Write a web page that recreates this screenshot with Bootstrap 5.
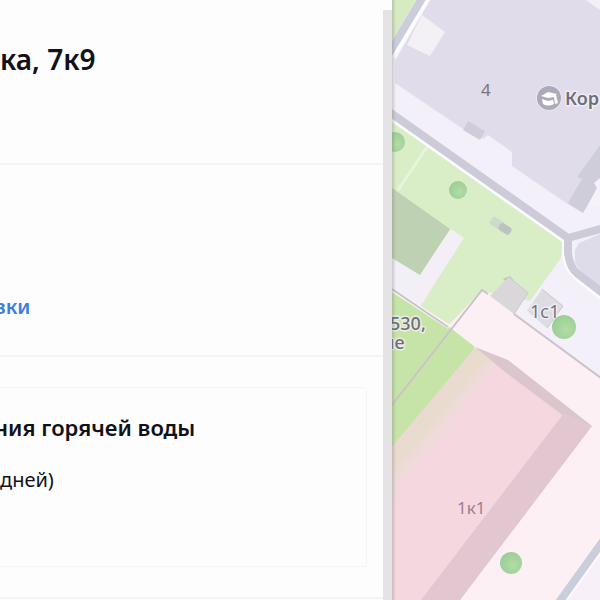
<!DOCTYPE html>
<html lang="ru">
<head>
<meta charset="utf-8">
<meta name="viewport" content="width=device-width, initial-scale=1">
<title>Отключение горячей воды</title>
<link href="https://cdn.jsdelivr.net/npm/bootstrap@5.3.0/dist/css/bootstrap.min.css" rel="stylesheet">
<style>
body { font-family: "Noto Sans", "Open Sans", sans-serif; color: #111118; background: #fefdfe; }
.panel { flex: 0 0 392px; background: #fefdfe; }
.panel-body { min-width: 0; }
.track { width: 9px; margin-top: 10px; background: #e5e3e6; }
.section { border-bottom: 2px solid #f5f3f7; white-space: nowrap; }
.address { height: 165px; padding-top: 40px; }
.address h1 { font-size: 28px; line-height: 38px; font-weight: 600; margin: 0; }
.details { height: 192px; padding-top: 128px; }
.details a { font-size: 20px; line-height: 28px; font-weight: 600; color: #3b7de0; margin-left: -6px; text-decoration: none; }
.outage { height: 242px; padding: 30px 16px 30px 0; }
.notice { border: 1px solid #f6f3f8; border-left: 0; padding-top: 23px; overflow: hidden; }
.notice h2 { font-size: 22px; line-height: 32px; font-weight: 600; margin: 0 0 23px -6px; }
.notice p { font-size: 20px; line-height: 28px; margin: 0; }
.map { min-width: 0; background: #f3f0f9; }
.map svg { width: 100%; height: 100%; display: block; }
.map text { font-family: "Noto Sans", sans-serif; fill: #77747f; }
.map .halo { paint-order: stroke; stroke: #f4f3f6; stroke-width: 3px; stroke-linejoin: round; stroke-opacity: .8; }
.map .poi { fill: #6f6d78; }
.map .house { fill: #9b7f8c; }
</style>
<script src="https://cdn.jsdelivr.net/npm/bootstrap@5.3.0/dist/js/bootstrap.bundle.min.js"></script>
</head>
<body>
<div class="d-flex vh-100 overflow-hidden">
  <aside class="panel d-flex overflow-hidden">
    <main class="panel-body flex-grow-1">
      <header class="section address"><h1>ка, 7к9</h1></header>
      <section class="section details"><a href="#" class="d-inline-block">вки</a></section>
      <section class="section outage">
        <div class="notice h-100 rounded-end-1">
          <h2>ния горячей воды</h2>
          <p>дней)</p>
        </div>
      </section>
    </main>
    <div class="track"></div>
  </aside>
  <div class="map flex-grow-1">
    <svg viewBox="392 0 208 600" preserveAspectRatio="xMinYMin slice" role="img" aria-label="Карта">
      <defs>
        <linearGradient id="fade" gradientUnits="userSpaceOnUse" x1="430" y1="392" x2="462" y2="418">
          <stop offset="0" stop-color="#c9e5aa"/><stop offset=".12" stop-color="#ead9d2"/><stop offset=".45" stop-color="#e8dccd"/><stop offset=".75" stop-color="#f0dadb"/><stop offset="1" stop-color="#f5d8df"/>
        </linearGradient>
        <radialGradient id="leaf" cx=".6" cy=".6" r=".6">
          <stop offset="0" stop-color="#b3dda4"/><stop offset="1" stop-color="#9ccd98"/>
        </radialGradient>
        <linearGradient id="edge"><stop offset="0" stop-color="#666" stop-opacity=".28"/><stop offset="1" stop-color="#666" stop-opacity="0"/></linearGradient>
      </defs>
      <rect x="392" width="208" height="600" fill="#f3f0f9"/>
      <!-- campus -->
      <path fill="#d7ebc2" d="M392 0h27l-27 43z"/>
      <path fill="#e0dcea" d="M430 0H586L600 10V184L583 213 569 205 512 166 512 152 488 135 483 139 463 129 395 83V61z"/>
      <path fill="#f3f1f6" d="M422 15l23 17-15 24-23-11z"/>
      <path stroke="#fcfcff" stroke-width="12" d="M426-5L390 55"/>
      <path stroke="#cbcddb" stroke-width="8" d="M424-5L388 55"/>
      <path fill="#d0cddb" d="M468 121l17 10-5 9-17-10zM600 145l-7 10-16 22 5 2-14 24 15 10 14-25-2-5 5-4z"/>
      <path fill="#f5f2fa" d="M600 178l-6 5 3 5-9 18h12z"/>
      <!-- park -->
      <path fill="#d9edc7" d="M392 119l171 123-2 16-31 43-44-9-38 33-56-34z"/>
      <path fill="#f1eff7" d="M392 257l28 18 31-45 13 8-42 65-2 5-28-18z"/>
      <path fill="#f4eef7" d="M451 229l13 9-25 38-16 27-15-15z"/>
      <path fill="#bed1b3" d="M392 188l58 41-30 46-28-17z"/>
      <path stroke="#e8f4dc" stroke-width="3" d="M427 147l-29 43"/>
      <g transform="rotate(32 502 227)"><rect x="489" y="222" width="14" height="9" rx="3" fill="#cbdccb"/><rect x="499" y="223" width="13" height="8" rx="3" fill="#bcc2c1"/></g>
      <path fill="#b5d0aa" d="M503 279l7-3 3 4-4 4z"/>
      <!-- streets -->
      <path fill="#dfdcea" d="M600 234l-21 9-4 7v13l8 11 17 14z"/>
      <g fill="none" stroke-linejoin="round">
        <path stroke="#fbfbff" stroke-width="10" d="M388 113l180 127M567 240v13q1 15 10 22l26 21"/>
        <path stroke="#cdcbd7" stroke-width="8" d="M388 111l180 127 36-10M568 239v13q1 15 10 22l26 20"/>
      </g>
      <!-- courtyard -->
      <path fill="#c6e4a7" d="M392 290l57 36 31 22-75 92-13 12z"/>
      <path fill="#fcf0f4" d="M482 290l33 24 85 63V600H392V480l83-133-27-21z"/>
      <path fill="#c6e4a7" d="M448 326l26 22-72 90-10 12v-62z"/>
      <path fill="#f5d8df" d="M475 348l20 8 97 70-132 174h-68V447z"/>
      <path fill="url(#fade)" d="M475 348l25 13-45 60-63 77v-50z"/>
      <path fill="#dbc6cd" d="M475 347l33 13 84 66-27-9-60-45z"/>
      <path fill="#e3c7d0" d="M564 413l28 13-132 174h-39z"/>
      <path fill="none" stroke="#faf6f9" stroke-width="4" d="M391 289l58 38"/>
      <path fill="none" stroke="#cbc2c8" stroke-width="2" d="M392 289l56 38M392 405l90-115 6 4M514 314l87 64"/>
      <path fill="#d9d7da" d="M509 277l19 16-14 21-24-18z"/>
      <path fill="#dddce2" d="M542 289l21 17-16 22-20-17z"/>
      <path fill="none" stroke="#cbc8cf" stroke-width="1" d="M509 277l19 16-14 21M542 289l21 17-16 22"/>
      <path fill="#f7f0f8" d="M600 548v52h-37z"/>
      <path stroke="#fbfafe" stroke-width="10" d="M604 541l-46 64"/>
      <path stroke="#c9ceda" stroke-width="8" d="M603 541l-46 64"/>
      <g fill="url(#leaf)">
        <circle cx="395" cy="142" r="10"/><circle cx="458" cy="190" r="9"/><circle cx="511" cy="563" r="11"/>
      </g>
      <!-- labels -->
      <circle cx="549" cy="98" r="13" fill="#e9e6f2"/><circle cx="549" cy="98" r="12" fill="#aeabb9"/>
      <path fill="#fff" d="M541 96l7-4 9 2-1 1 2 8-3 1-1-7-6 1zM542 99l6 2 5-1 1 4q-6 3-11 0z"/>
      <text x="565" y="105" class="halo poi" font-size="18" font-weight="600">Кор</text>
      <text x="481" y="96" font-size="17">4</text>
      <text x="530" y="318" class="halo" font-size="18">1с1</text>
      <circle cx="564" cy="327" r="12" fill="url(#leaf)"/>
      <text x="390" y="330" class="halo poi" font-size="18" font-weight="500">530,</text>
      <text x="383" y="349" class="halo poi" font-size="18" font-weight="500">ие</text>
      <text x="457" y="514" class="house" font-size="17">1к1</text>
      <rect x="392" width="4" height="600" fill="url(#edge)"/>
    </svg>
  </div>
</div>
</body>
</html>
